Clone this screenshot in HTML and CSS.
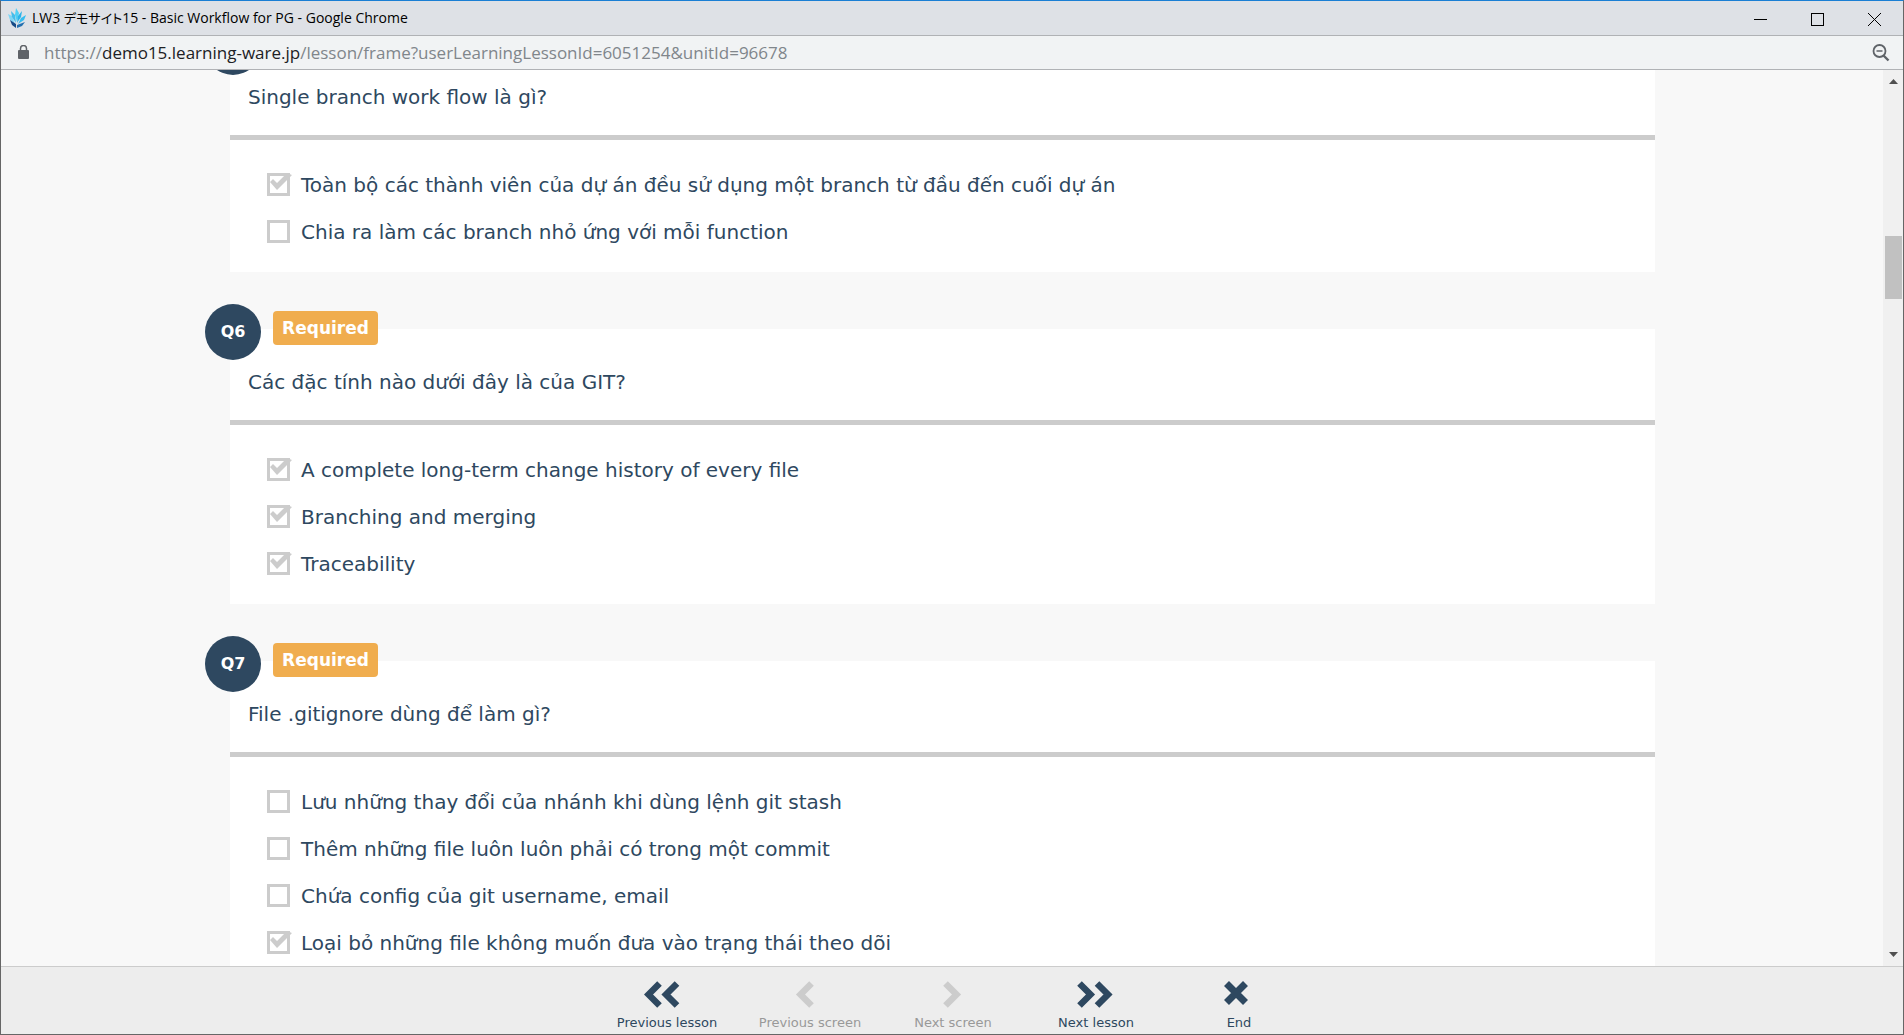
FILE: index.html
```html
<!DOCTYPE html>
<html lang="vi">
<head>
<meta charset="utf-8">
<title>LW3 デモサイト15 - Basic Workflow for PG</title>
<link rel="stylesheet" href="styles.css">
</head>
<body>
<div class="window">
  <header class="titlebar">
    <svg class="favicon" width="20" height="20" viewBox="0 0 20 20" aria-hidden="true">
      <path d="M1 6 L5 8 L8 16 L3 12 Z" fill="#7fd6f5"/>
      <path d="M4 3 L8 7 L9 15 L5 9 Z" fill="#45bdea"/>
      <path d="M9 0 L12 5 L10 14 L8 7 Z" fill="#4fd0f5"/>
      <path d="M15 3 L14 9 L10 15 L11 8 Z" fill="#2bb3ea"/>
      <path d="M19 7 L17 12 L11 16 L14 10 Z" fill="#35bdf0"/>
      <path d="M3 12 L9 16 L9 20 L5 17 Z" fill="#164a86"/>
      <path d="M10 17 L18 14 L15 18 L10 20 Z" fill="#2470b0"/>
    </svg>
    <span class="titlebar__text">LW3 <span class="titlebar__kana" lang="ja">デモサイト</span>15 - Basic Workflow for PG - Google Chrome</span>
    <div class="controls">
      <button type="button" class="control" aria-label="Minimize"><svg width="13" height="13" viewBox="0 0 13 13"><path d="M0 6.500H13" stroke="#000"/></svg></button>
      <button type="button" class="control" aria-label="Maximize"><svg width="13" height="13" viewBox="0 0 13 13"><rect x=".5" y=".5" width="12" height="12" fill="none" stroke="#000"/></svg></button>
      <button type="button" class="control" aria-label="Close"><svg width="13" height="13" viewBox="0 0 13 13"><path d="M0 0L13 13M13 0L0 13" stroke="#000"/></svg></button>
    </div>
  </header>

  <div class="addressbar">
    <svg class="lock" width="11" height="15" viewBox="0 0 11 15" aria-hidden="true"><rect y="5" width="11" height="9" rx="1" fill="#5f6368"/><path d="M2.500 6V3.500a3 3 0 0 1 6 0V6" fill="none" stroke="#5f6368" stroke-width="1.500"/></svg>
    <div class="url">https://<span class="url__host">demo15.learning-ware.jp</span>/lesson/frame?userLearningLessonId=6051254&amp;unitId=96678</div>
    <button type="button" class="zoom" aria-label="Zoom out"><svg width="18" height="18" viewBox="0 0 18 18" fill="none" stroke="#5f6368" stroke-width="1.800"><circle cx="7.500" cy="7" r="6"/><path d="M11.500 11.500L16.500 16.500" stroke-width="2.400"/><path d="M4.500 7h6" stroke-width="1.500"/></svg></button>
  </div>

  <div class="viewport">
    <main class="page">
      <section class="question">
        <span class="question__number" role="img" aria-label="Question 5"></span>
        <h2 class="question__text">Single branch work flow là gì?</h2>
        <div class="options">
          <label class="option"><input type="checkbox" checked>Toàn bộ các thành viên của dự án đều sử dụng một branch từ đầu đến cuối dự án</label>
          <label class="option"><input type="checkbox">Chia ra làm các branch nhỏ ứng với mỗi function</label>
        </div>
      </section>
      <section class="question">
        <span class="question__number">Q6</span>
        <span class="question__required">Required</span>
        <h2 class="question__text">Các đặc tính nào dưới đây là của GIT?</h2>
        <div class="options">
          <label class="option"><input type="checkbox" checked>A complete long-term change history of every file</label>
          <label class="option"><input type="checkbox" checked>Branching and merging</label>
          <label class="option"><input type="checkbox" checked>Traceability</label>
        </div>
      </section>
      <section class="question">
        <span class="question__number">Q7</span>
        <span class="question__required">Required</span>
        <h2 class="question__text">File .gitignore dùng để làm gì?</h2>
        <div class="options">
          <label class="option"><input type="checkbox">Lưu những thay đổi của nhánh khi dùng lệnh git stash</label>
          <label class="option"><input type="checkbox">Thêm những file luôn luôn phải có trong một commit</label>
          <label class="option"><input type="checkbox">Chứa config của git username, email</label>
          <label class="option"><input type="checkbox" checked>Loại bỏ những file không muốn đưa vào trạng thái theo dõi</label>
        </div>
      </section>
    </main>
    <div class="scrollbar" aria-hidden="true">
      <svg width="9" height="5" viewBox="0 0 9 5"><path d="M0 5L4.500 0L9 5Z" fill="#505050"/></svg>
      <div class="scrollbar__track"><div class="scrollbar__thumb"></div></div>
      <svg width="9" height="5" viewBox="0 0 9 5"><path d="M0 0L4.500 5L9 0Z" fill="#505050"/></svg>
    </div>
  </div>

  <footer class="lessonnav">
    <button type="button" class="navbtn">
      <svg width="46" height="27" viewBox="0 0 46 27" fill="none" stroke="currentColor" stroke-width="6.500"><path d="M15.500 2.500L4.500 13.500L15.500 24.500M33 2.500L22 13.500L33 24.500"/></svg>
      Previous lesson</button>
    <button type="button" class="navbtn" disabled>
      <svg width="46" height="27" viewBox="0 0 46 27" fill="none" stroke="#ccc" stroke-width="6.500"><path d="M24.500 2.500L13.500 13.500L24.500 24.500"/></svg>
      Previous screen</button>
    <button type="button" class="navbtn" disabled>
      <svg width="46" height="27" viewBox="0 0 46 27" fill="none" stroke="#ccc" stroke-width="6.500"><path d="M15.500 2.500L26.500 13.500L15.500 24.500"/></svg>
      Next screen</button>
    <button type="button" class="navbtn">
      <svg width="46" height="27" viewBox="0 0 46 27" fill="none" stroke="currentColor" stroke-width="6.500"><path d="M6.500 2.500L17.500 13.500L6.500 24.500M24 2.500L35 13.500L24 24.500"/></svg>
      Next lesson</button>
    <button type="button" class="navbtn">
      <svg width="46" height="27" viewBox="0 0 46 27" fill="none" stroke="currentColor" stroke-width="7"><path d="M10.500 2.500L29.500 21.500M29.500 2.500L10.500 21.500"/></svg>
      End</button>
  </footer>
</div>
</body>
</html>
```
FILE: styles.css
```css
* { box-sizing: border-box; }

body {
  margin: 0;
  font-family: "DejaVu Sans", Verdana, sans-serif;
  color: #2e4860;
}

button {
  margin: 0;
  padding: 0;
  border: 0;
  background: none;
  font: inherit;
  color: inherit;
}

svg { display: block; flex: none; }

.window {
  display: flex;
  flex-direction: column;
  height: 100vh;
  border: 1px solid #666;
  border-top-color: #1a7fd4;
  overflow: hidden;
}

/* Browser chrome */
.titlebar {
  display: flex;
  align-items: center;
  flex: none;
  height: 35px;
  padding-left: 6px;
  background: #dee1e6;
  border-bottom: 1px solid #b0b2b5;
  font: 14px/20px "Open Sans", "Noto Sans CJK JP", sans-serif;
  color: #000;
}

.titlebar__text { margin-left: 5px; white-space: nowrap; }
.titlebar__kana { font: 13px/20px "Noto Sans CJK JP", sans-serif; font-feature-settings: "palt"; }
.controls { display: flex; margin-left: auto; }

.control {
  display: grid;
  place-items: center;
  width: 57px;
  height: 34px;
  padding-top: 2px;
}

.addressbar {
  display: flex;
  align-items: center;
  flex: none;
  height: 34px;
  padding: 0 13px 0 17px;
  background: #f1f3f4;
  border-bottom: 1px solid #b0b2b5;
  font: 17px/24px "Open Sans", sans-serif;
  color: #80868b;
}

.url { flex: 1; margin-left: 15px; white-space: nowrap; }
.url__host { color: #202124; }

/* Lesson page */
.viewport {
  display: flex;
  flex: 1;
  min-height: 0;
  background: #f8f8f8;
  overflow: hidden;
}

.page {
  flex: 1;
  margin-top: -26px;
  padding: 0 228px 0 229px;
}

.question {
  position: relative;
  margin-bottom: 57px;
  background: #fff;
}

.question__number,
.question__required {
  position: absolute;
  color: #fff;
  font-weight: bold;
  text-align: center;
}

.question__number {
  top: -25px;
  left: -25px;
  width: 56px;
  height: 56px;
  border-radius: 50%;
  background: #2e4860;
  font-size: 16px;
  line-height: 56px;
}

.question__required {
  top: -18px;
  left: 43px;
  width: 105px;
  border-radius: 4px;
  background: #f0ad4e;
  font-size: 17px;
  line-height: 34px;
}

.question__text {
  margin: 0;
  padding: 39px 18px 24px;
  border-bottom: 5px solid #ccc;
  font-size: 20px;
  font-weight: normal;
  line-height: 28px;
}

.options { padding: 21px 37px 17px; }

.option {
  display: flex;
  align-items: center;
  gap: 11px;
  height: 47px;
  font-size: 20px;
}

.option input {
  position: relative;
  flex: none;
  width: 23px;
  height: 23px;
  margin: 0;
  border: 3px solid #ccc;
  background: #fff;
  appearance: none;
}

.option input:checked::before {
  content: "";
  position: absolute;
  inset: -3px -5px -3px -3px;
  background: #ccc;
  clip-path: polygon(3px 9px, 6px 6px, 10px 10px, 20px 0, 25px 2px, 10px 17px);
}

.scrollbar {
  display: flex;
  flex-direction: column;
  align-items: center;
  flex: none;
  width: 20px;
  padding: 9px 0;
  background: #f0f0f0;
}

.scrollbar__track { flex: 1; padding-top: 152px; }
.scrollbar__thumb { width: 17px; height: 63px; background: #c1c1c1; }

/* Lesson navigation */
.lessonnav {
  display: flex;
  justify-content: center;
  flex: none;
  height: 68px;
  padding-left: 2px;
  background: #ededed;
  border-top: 1px solid #ccc;
}

.navbtn {
  display: flex;
  flex-direction: column;
  align-items: center;
  gap: 7px;
  width: 143px;
  padding-top: 14px;
  font-size: 13px;
  line-height: 16px;
}

.navbtn:disabled { color: #999; }
```
